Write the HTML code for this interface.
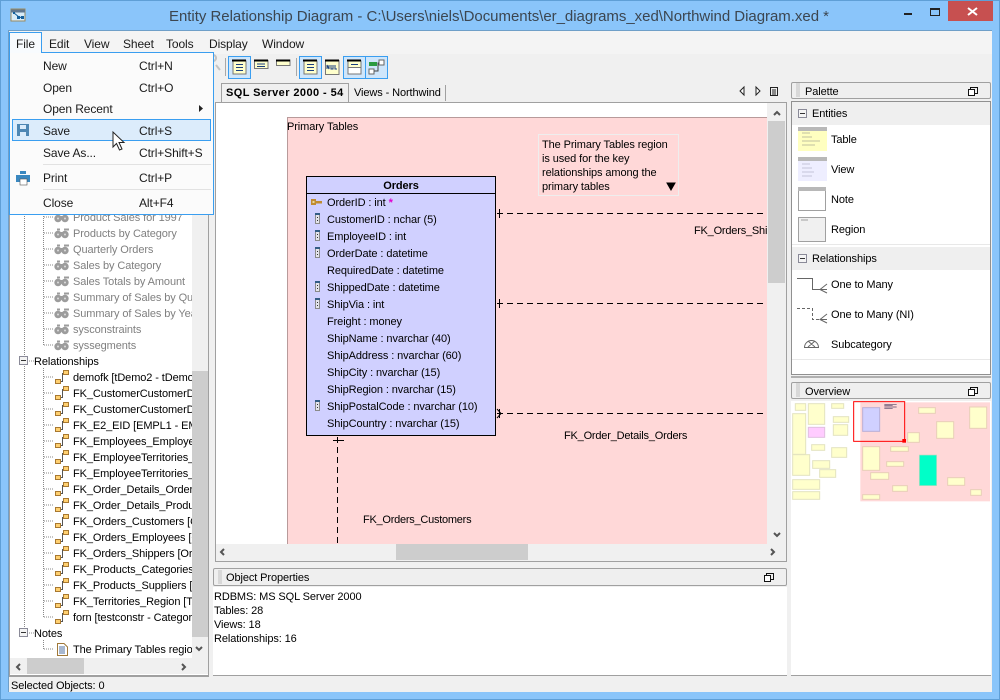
<!DOCTYPE html>
<html><head><meta charset="utf-8"><title>Entity Relationship Diagram</title>
<style>
html,body{margin:0;padding:0}
body{width:1000px;height:700px;overflow:hidden;position:relative;background:#8ac5fa;font:11px/14px "Liberation Sans",sans-serif;color:#000}
div{position:absolute;box-sizing:border-box}
.t{white-space:nowrap;height:14px;letter-spacing:-.1px;margin-top:1px}
.g{color:#808080}
svg{position:absolute;left:0;top:0}
.m{font-size:12px;letter-spacing:-.1px;color:#1a1a1a;margin-top:0}
.clip{overflow:hidden}
</style></head><body>
<div style="left:0;top:0;width:1000px;height:700px;border:1px solid #5f9fd6"></div>
<div class="t" id="title" style="left:169px;top:7px;height:18px;font-size:15px;line-height:18px;color:#3c4650;letter-spacing:-.03px">Entity Relationship Diagram - C:\Users\niels\Documents\er_diagrams_xed\Northwind Diagram.xed *</div>
<div style="left:948px;top:1px;width:45px;height:20px;background:#c75050"></div>
<div style="left:8px;top:30px;width:984px;height:662px;background:#f0f0f0;border:1px solid #6f9fc8;border-width:1px 0 0 1px"></div>
<div style="left:9px;top:31px;width:983px;height:23px;background:#f4f4f4"></div>

<!-- menu bar -->
<div class="t m" style="left:49px;top:37px">Edit</div>
<div class="t m" style="left:84px;top:37px">View</div>
<div class="t m" style="left:123px;top:37px">Sheet</div>
<div class="t m" style="left:166px;top:37px">Tools</div>
<div class="t m" style="left:209px;top:37px">Display</div>
<div class="t m" style="left:262px;top:37px">Window</div>

<!-- left tree panel -->
<div style="left:9px;top:54px;width:200px;height:623px;background:#fff;border:1px solid #a0a0a0;border-top:0"></div>
<div style="left:192px;top:214px;width:16px;height:444px;background:#f0f0f0"></div>
<div style="left:192px;top:371px;width:16px;height:266px;background:#cdcdcd"></div>
<div style="left:10px;top:658px;width:198px;height:16px;background:#f0f0f0"></div>
<div style="left:27px;top:658px;width:57px;height:16px;background:#cdcdcd"></div>
<div style="left:9px;top:675px;width:200px;height:2px;background:#a0a0a0"></div>
<div class="clip" id="tree" style="left:10px;top:208px;width:182px;height:450px">
<div class="t g" style="left:63px;top:2px">Product Sales for 1997</div>
<div class="t g" style="left:63px;top:18px">Products by Category</div>
<div class="t g" style="left:63px;top:34px">Quarterly Orders</div>
<div class="t g" style="left:63px;top:50px">Sales by Category</div>
<div class="t g" style="left:63px;top:66px">Sales Totals by Amount</div>
<div class="t g" style="left:63px;top:82px">Summary of Sales by Quarter</div>
<div class="t g" style="left:63px;top:98px">Summary of Sales by Year</div>
<div class="t g" style="left:63px;top:114px">sysconstraints</div>
<div class="t g" style="left:63px;top:130px">syssegments</div>
<div class="t" style="left:24px;top:146px">Relationships</div>
<div class="t" style="left:63px;top:162px">demofk [tDemo2 - tDemo1]</div>
<div class="t" style="left:63px;top:178px">FK_CustomerCustomerDemo</div>
<div class="t" style="left:63px;top:194px">FK_CustomerCustomerDemo</div>
<div class="t" style="left:63px;top:210px">FK_E2_EID [EMPL1 - EMPL2]</div>
<div class="t" style="left:63px;top:226px">FK_Employees_Employees</div>
<div class="t" style="left:63px;top:242px">FK_EmployeeTerritories_Emp</div>
<div class="t" style="left:63px;top:258px">FK_EmployeeTerritories_Terr</div>
<div class="t" style="left:63px;top:274px">FK_Order_Details_Orders</div>
<div class="t" style="left:63px;top:290px">FK_Order_Details_Products</div>
<div class="t" style="left:63px;top:306px">FK_Orders_Customers [Orders]</div>
<div class="t" style="left:63px;top:322px">FK_Orders_Employees [Orders]</div>
<div class="t" style="left:63px;top:338px">FK_Orders_Shippers [Orders]</div>
<div class="t" style="left:63px;top:354px">FK_Products_Categories</div>
<div class="t" style="left:63px;top:370px">FK_Products_Suppliers [Prod]</div>
<div class="t" style="left:63px;top:386px">FK_Territories_Region [Terr]</div>
<div class="t" style="left:63px;top:402px">forn [testconstr - Categories]</div>
<div class="t" style="left:24px;top:418px">Notes</div>
<div class="t" style="left:63px;top:434px">The Primary Tables region is</div>
</div>
<div class="t" style="left:11px;top:678px">Selected Objects: 0</div>

<!-- tabs -->
<div style="left:221px;top:83px;width:128px;height:20px;background:#f0f0f0;border:1px solid #a0a0a0;border-bottom:0"></div>
<div class="t" style="left:226px;top:85px;font-weight:bold;letter-spacing:.42px">SQL Server 2000 - 54</div>
<div class="t" style="left:354px;top:85px">Views - Northwind</div>
<div style="left:445px;top:85px;width:1px;height:16px;background:#a0a0a0"></div>

<!-- diagram -->
<div style="left:215px;top:102px;width:572px;height:460px;background:#f0f0f0;border:1px solid #a0a0a0"></div>
<div style="left:216px;top:103px;width:551px;height:441px;background:#fff"></div>
<div style="left:768px;top:121px;width:17px;height:162px;background:#cdcdcd"></div>
<div style="left:396px;top:544px;width:132px;height:16px;background:#cdcdcd"></div>
<div class="clip" style="left:216px;top:103px;width:551px;height:441px">
  <div style="left:71px;top:14px;width:490px;height:440px;background:#ffd8d8;border:1px solid #b89a9a;border-width:1px 0 0 1px"></div>
  <div class="t" style="left:71px;top:16px">Primary Tables</div>
  <div style="left:322px;top:31px;width:141px;height:62px;border:1px solid #eee"></div>
  <div class="t" style="left:326px;top:34px">The Primary Tables region</div>
  <div class="t" style="left:326px;top:48px">is used for the key</div>
  <div class="t" style="left:326px;top:62px">relationships among the</div>
  <div class="t" style="left:326px;top:76px">primary tables</div>
  <div class="t" style="left:478px;top:120px;letter-spacing:-.2px">FK_Orders_Shippers</div>
  <div class="t" style="left:348px;top:325px;letter-spacing:-.2px">FK_Order_Details_Orders</div>
  <div class="t" style="left:147px;top:409px;letter-spacing:-.25px">FK_Orders_Customers</div>
  <svg width="551" height="441" style="left:0;top:0" fill="none" stroke="#000">
    <path d="M281 110.500H551M281 200.500H551M281 310.500H551" stroke-dasharray="6 4"/>
    <path d="M121.500 334V441" stroke-dasharray="6 4"/>
    <path d="M283.500 106V115M283.500 196V205M283.500 306V315M281 306L285 310.500 281 315M117 337.500H128"/>
    <path d="M451 80h8l-4 7z" fill="#000"/>
  </svg>
</div>

<!-- Orders table -->
<div style="left:306px;top:176px;width:190px;height:260px;background:#d0d0ff;border:1px solid #000"></div>
<div style="left:306px;top:193px;width:190px;height:1px;background:#000"></div>
<div class="t" style="left:306px;top:178px;width:190px;text-align:center;font-weight:bold">Orders</div>
<div class="t" style="left:327px;top:195px">OrderID : int <span style="color:#e000d0;font-weight:bold">*</span></div>
<div class="t" style="left:327px;top:212px">CustomerID : nchar (5)</div>
<div class="t" style="left:327px;top:229px">EmployeeID : int</div>
<div class="t" style="left:327px;top:246px">OrderDate : datetime</div>
<div class="t" style="left:327px;top:263px">RequiredDate : datetime</div>
<div class="t" style="left:327px;top:280px">ShippedDate : datetime</div>
<div class="t" style="left:327px;top:297px">ShipVia : int</div>
<div class="t" style="left:327px;top:314px">Freight : money</div>
<div class="t" style="left:327px;top:331px">ShipName : nvarchar (40)</div>
<div class="t" style="left:327px;top:348px">ShipAddress : nvarchar (60)</div>
<div class="t" style="left:327px;top:365px">ShipCity : nvarchar (15)</div>
<div class="t" style="left:327px;top:382px">ShipRegion : nvarchar (15)</div>
<div class="t" style="left:327px;top:399px">ShipPostalCode : nvarchar (10)</div>
<div class="t" style="left:327px;top:416px">ShipCountry : nvarchar (15)</div>

<!-- Object properties -->
<div style="left:213px;top:568px;width:574px;height:18px;background:#efefef;border:1px solid #a0a0a0;border-radius:2px"></div>
<div class="t" style="left:226px;top:570px">Object Properties</div>
<div style="left:213px;top:587px;width:574px;height:89px;background:#fff;border-bottom:1px solid #a0a0a0"></div>
<div class="t" style="left:214px;top:589px">RDBMS: MS SQL Server 2000</div>
<div class="t" style="left:214px;top:603px">Tables: 28</div>
<div class="t" style="left:214px;top:617px">Views: 18</div>
<div class="t" style="left:214px;top:631px">Relationships: 16</div>

<!-- right column -->
<div style="left:791px;top:82px;width:200px;height:17px;background:#efefef;border:1px solid #a0a0a0;border-radius:2px"></div>
<div class="t" style="left:805px;top:84px">Palette</div>
<div style="left:791px;top:101px;width:200px;height:274px;background:#fff;border:1px solid #909090"></div>
<div style="left:792px;top:102px;width:198px;height:23px;background:#efefef"></div>
<div class="t" style="left:812px;top:106px">Entities</div>
<div class="t" style="left:831px;top:132px">Table</div>
<div class="t" style="left:831px;top:162px">View</div>
<div class="t" style="left:831px;top:192px">Note</div>
<div class="t" style="left:831px;top:222px">Region</div>
<div style="left:792px;top:244px;width:198px;height:1px;background:#e8e8e8"></div>
<div style="left:792px;top:247px;width:198px;height:23px;background:#efefef"></div>
<div class="t" style="left:812px;top:251px">Relationships</div>
<div class="t" style="left:831px;top:277px">One to Many</div>
<div class="t" style="left:831px;top:307px">One to Many (NI)</div>
<div class="t" style="left:831px;top:337px">Subcategory</div>
<div style="left:792px;top:359px;width:198px;height:1px;background:#e8e8e8"></div>
<div style="left:791px;top:376px;width:200px;height:2px;background:#b0b0b0"></div>
<div style="left:791px;top:382px;width:200px;height:17px;background:#efefef;border:1px solid #a0a0a0;border-radius:2px"></div>
<div class="t" style="left:805px;top:384px">Overview</div>
<div style="left:791px;top:401px;width:200px;height:275px;background:#fff;border-bottom:1px solid #a0a0a0"></div>

<!-- overview -->
<svg width="220" height="270" viewBox="0 0 660 810" style="left:780px;top:240px">
<rect x="241" y="487" width="389" height="297" fill="#ffd8d8"/>
<g fill="#ffffcc" stroke="#e4e4c0" stroke-width="3">
<rect x="46" y="491" width="31" height="20"/><rect x="85" y="491" width="49" height="62"/><rect x="155" y="491" width="36" height="14"/><rect x="160" y="530" width="46" height="17"/><rect x="160" y="554" width="43" height="32"/><rect x="38" y="521" width="39" height="122"/><rect x="95" y="614" width="39" height="17"/><rect x="155" y="623" width="45" height="29"/><rect x="38" y="644" width="51" height="62"/><rect x="98" y="662" width="51" height="23"/><rect x="119" y="689" width="48" height="23"/><rect x="38" y="719" width="81" height="29"/><rect x="38" y="755" width="81" height="23"/>
</g>
<rect x="85" y="562" width="49" height="30" fill="#ffccff" stroke="#e0c0e0" stroke-width="3"/>
<g fill="#ffffcc" stroke="#e8d0b8" stroke-width="3">
<rect x="416" y="503" width="50" height="17"/><rect x="569" y="501" width="51" height="64"/><rect x="470" y="545" width="51" height="50"/><rect x="383" y="578" width="35" height="29"/><rect x="248" y="620" width="51" height="71"/><rect x="332" y="620" width="53" height="14"/><rect x="320" y="665" width="51" height="14"/><rect x="272" y="698" width="54" height="20"/><rect x="503" y="713" width="51" height="23"/><rect x="338" y="737" width="44" height="17"/><rect x="572" y="749" width="32" height="17"/><rect x="248" y="764" width="51" height="14"/>
</g>
<rect x="418" y="645" width="52" height="92" fill="#00ffc8" stroke="#c0d8c0" stroke-width="2"/>
<rect x="248" y="503" width="51" height="71" fill="#d0d0ff" stroke="#b8b0d8" stroke-width="3"/>
<path d="M313 493h37M313 497h25M313 501h37M313 505h25" stroke="#554466" stroke-width="2"/>
<rect x="221" y="485" width="153" height="119" fill="none" stroke="#f00" stroke-width="3"/>
<rect x="367" y="597" width="11" height="11" fill="#f00"/>
</svg>

<!-- global icon overlay -->
<svg width="1000" height="700" fill="none">
<defs>
<g id="rel"><path d="M5 4.500H7.500V-3.500H9" stroke="#555"/><rect x=".5" y="2.500" width="5" height="4" fill="#ffd070" stroke="#a87830"/><rect x="8.500" y="-6.500" width="5" height="4" fill="#ffd070" stroke="#a87830"/></g>
<g id="vw"><circle cx="4" cy="1.500" r="3.700" fill="#9c9c9c"/><circle cx="11" cy="1.500" r="3.700" fill="#9c9c9c"/><path d="M3 -3.500H6M6 0H9M10 -3.500H15" stroke="#9c9c9c" stroke-width="2"/><circle cx="4" cy="1.500" r="1" fill="#dcdcdc"/><circle cx="11" cy="1.500" r="1" fill="#dcdcdc"/></g>
<g id="idx"><rect x="-1.500" y="-5.500" width="4" height="10" fill="#e4e4ec" stroke="#8a8a8a"/><rect x="-2" y="-6" width="5" height="2" fill="#335c85"/><path d="M.5 -2v1M.5 1v1" stroke="#333"/></g>
<g id="exp"><rect x=".5" y=".5" width="8" height="8" fill="#f4f4f4" stroke="#8a8a98"/><path d="M2 4.500H7" stroke="#333"/></g>
<g id="res"><rect x=".5" y="2.500" width="6" height="6" fill="#fff" stroke="#111"/><path d="M2.500 2.500V.5H9.500V6.500H6.500" stroke="#111"/></g>
<g id="grip"><path d="M0 0H4M0 2H4M0 4H4M0 6H4M0 8H4M0 10H4M0 12H4" stroke="#c0c0c0"/></g>
</defs>

<!-- title icon + window buttons -->
<rect x="11" y="9" width="14" height="12" fill="#d8ecf8" stroke="#9a8a60"/><path d="M11 11H25" stroke="#607890" stroke-width="3"/><path d="M14 13L19 17L23 18" stroke="#14609c"/><rect x="13" y="12" width="2" height="2" fill="#14609c"/><rect x="17" y="16" width="3" height="3" fill="#14609c"/><rect x="21" y="16" width="3" height="3" fill="#14609c"/>
<path d="M904 14H912" stroke="#222" stroke-width="2"/><rect x="930.500" y="8.500" width="9" height="7" stroke="#222"/><path d="M930 9H940" stroke="#222" stroke-width="2"/>
<path d="M968 8L977 15M977 8L968 15" stroke="#fff" stroke-width="2"/>

<!-- toolbar -->
<path d="M225.500 58V76M296.500 58V76" stroke="#a8a8a8"/>
<path d="M213 61a3 3 0 1 1 .1 0M216 65L220 70" stroke="#c4c4c4" stroke-width="2"/>
<g fill="#cfe6fb" stroke="#3a9ef0"><rect x="228.500" y="56.500" width="22" height="22"/><rect x="299.500" y="56.500" width="22" height="22"/><rect x="343.500" y="56.500" width="22" height="22"/><rect x="365.500" y="56.500" width="22" height="22"/></g>
<path d="M233 61H246V74H233Z" fill="#ffffcc" stroke="#777"/><path d="M232 60.500H246" stroke="#000" stroke-width="2"/><path d="M236 64.500H243M236 67.500H243M236 70.500H243" stroke="#1a3f80"/>
<path d="M254.500 60.500H268V68.500H254.500Z" fill="#ffffcc" stroke="#777"/><path d="M254 60.500H268" stroke="#000" stroke-width="2"/><path d="M257 64H265M257 66.500H265" stroke="#1a3f80"/>
<path d="M276.500 60H290V65.500H276.500Z" fill="#ffffcc" stroke="#777"/><path d="M276 60.500H290" stroke="#000" stroke-width="2"/>
<path d="M304 61H317V74H304Z" fill="#ffffcc" stroke="#777"/><path d="M303 60.500H317" stroke="#000" stroke-width="2"/><path d="M307 64.500H314M307 67.500H314M307 70.500H314" stroke="#1a3f80"/>
<path d="M325.500 60.500H339V74.500H325.500Z" fill="#ffffcc" stroke="#777"/><path d="M325 60.500H339" stroke="#000" stroke-width="2"/><path d="M327 69V65L329 69V65M331 65V69H333V65M335 65V69H337" stroke="#1a3f80"/>
<path d="M348 61H361V74H348Z" fill="#fff" stroke="#777"/><path d="M348 67.500H361V61H348Z" fill="#ffffcc" stroke="#777"/><path d="M347 60.500H361" stroke="#000" stroke-width="2"/><path d="M351 64.500H358" stroke="#1a3f80"/>
<rect x="369" y="69" width="5" height="5" fill="#fff" stroke="#666"/><rect x="379" y="60" width="5" height="5" fill="#fff" stroke="#666"/><path d="M374 71H378V63H379" stroke="#444"/><rect x="369" y="62" width="8" height="4" fill="#2a9a40"/>

<!-- tab nav -->
<path d="M744 87L740 91L744 95Z M756 87L760 91L756 95Z" stroke="#222" fill="#fff"/><rect x="770.500" y="87.500" width="7" height="8" stroke="#222"/><path d="M772 90H776M772 92H776M772 94H776" stroke="#222"/>

<!-- scroll arrows -->
<g stroke="#555" stroke-width="2"><path d="M774 115L777 112L780 115M774 533L777 536L780 533M224 549L221 552L224 555M771 549L774 552L771 555M196 647L199 650L202 647M20 664L17 667L20 670M182 664L185 667L182 670"/></g>

<!-- tree lines -->
<g stroke="#888" stroke-dasharray="1 1">
<path d="M24.500 214V630M43.500 214V345M43.500 368V617M43.500 640V649"/>
<path d="M44 217H54M44 233H54M44 249H54M44 265H54M44 281H54M44 297H54M44 313H54M44 329H54M44 345H54M29 361H34M44 377H54M44 393H54M44 409H54M44 425H54M44 441H54M44 457H54M44 473H54M44 489H54M44 505H54M44 521H54M44 537H54M44 553H54M44 569H54M44 585H54M44 601H54M44 617H54M29 633H34M44 649H54"/>
</g>
<use href="#vw" x="54" y="217"/><use href="#vw" x="54" y="233"/><use href="#vw" x="54" y="249"/><use href="#vw" x="54" y="265"/><use href="#vw" x="54" y="281"/><use href="#vw" x="54" y="297"/><use href="#vw" x="54" y="313"/><use href="#vw" x="54" y="329"/><use href="#vw" x="54" y="345"/>
<use href="#exp" x="19" y="356"/><use href="#exp" x="19" y="628"/>
<use href="#rel" x="55" y="377"/><use href="#rel" x="55" y="393"/><use href="#rel" x="55" y="409"/><use href="#rel" x="55" y="425"/><use href="#rel" x="55" y="441"/><use href="#rel" x="55" y="457"/><use href="#rel" x="55" y="473"/><use href="#rel" x="55" y="489"/><use href="#rel" x="55" y="505"/><use href="#rel" x="55" y="521"/><use href="#rel" x="55" y="537"/><use href="#rel" x="55" y="553"/><use href="#rel" x="55" y="569"/><use href="#rel" x="55" y="585"/><use href="#rel" x="55" y="601"/><use href="#rel" x="55" y="617"/>
<path d="M57.500 643.500H64L67.500 647V655.500H57.500Z" fill="#fff" stroke="#a07838"/><path d="M59 647H65M59 649H65M59 651H65M59 653H65" stroke="#5070a0"/>

<!-- table row icons -->
<path d="M311 199H316V205H311ZM316 201H322V203.500H316Z" fill="#c08c30"/><rect x="312.500" y="201" width="2" height="2" fill="#e8d8a0"/>
<use href="#idx" x="317" y="219"/><use href="#idx" x="317" y="236"/><use href="#idx" x="317" y="253"/><use href="#idx" x="317" y="287"/><use href="#idx" x="317" y="304"/><use href="#idx" x="317" y="406"/>

<!-- panel chrome -->
<use href="#grip" x="796" y="84"/><use href="#grip" x="796" y="384"/><use href="#grip" x="218" y="571"/>
<use href="#res" x="968" y="87"/><use href="#res" x="968" y="387"/><use href="#res" x="764" y="573"/>
<use href="#exp" x="798" y="109"/><use href="#exp" x="798" y="254"/>

<!-- palette thumbnails -->
<rect x="798" y="127" width="29" height="24" fill="#ffffc0"/><rect x="798" y="127" width="29" height="4" fill="#b8b8b8"/><path d="M802 133H810M802 137H812M802 141H820M802 145H815" stroke="#c0c0a0"/>
<rect x="798" y="157" width="29" height="24" fill="#eeeeff"/><rect x="798" y="157" width="29" height="4" fill="#b8b8b8"/><path d="M802 164H810M802 168H812M802 172H814M802 176H812" stroke="#c4c4d8"/>
<rect x="798.500" y="187.500" width="27" height="23" fill="#fff" stroke="#a0a0a0"/><rect x="798" y="187" width="28" height="4" fill="#b8b8b8"/>
<rect x="798.500" y="217.500" width="27" height="24" fill="#f0f0f0" stroke="#a0a0a0"/><path d="M801 220H808" stroke="#a0a0a0"/>

<path d="M797 278.500H812.500V289.500H824M827 284L820 289.500L827 293M824 289.500H827" stroke="#666"/>
<path d="M797 308.500H812.500V319.500H824" stroke="#666" stroke-dasharray="3 2"/><path d="M827 314L820 319.500L827 323M824 319.500H827" stroke="#666"/>
<path d="M804.500 347.500A7 7 0 0 1 818.500 347.500ZM808 341L815 347M815 341L808 347" stroke="#666"/>

<!-- file menu -->
<rect x="9.500" y="32.500" width="32" height="20" fill="#f8fbfe" stroke="#3a9ef0"/>
<rect x="9.500" y="52.500" width="204" height="162" fill="#fbfbfb" stroke="#3a9ef0"/>
<path d="M41 52.500H10" stroke="#f8fbfe" stroke-width="1"/>
<rect x="12.500" y="119.500" width="198" height="21" fill="#dcecfb" stroke="#3a9ef0"/>
<path d="M43 164.500H211M43 189.500H211" stroke="#e2e2e2"/>
<path d="M199 105L203 108.500L199 112Z" fill="#222"/>
<path d="M17 124H29V136H17Z" fill="#4f87b3"/><rect x="20" y="125" width="6" height="4" fill="#dcecfb"/><rect x="20" y="132" width="6" height="4" fill="#dcecfb"/>
<path d="M16 175H30V182H16Z" fill="#3a88c0"/><rect x="20" y="171" width="6" height="3" fill="#3a88c0"/><rect x="20" y="179" width="7" height="6" fill="#fff" stroke="#555" stroke-width=".6"/>
<path d="M113 132V147L116.500 143.500L119.500 150L122 149L119 142.500H124Z" fill="#fff" stroke="#222"/>
</svg>
<div class="t m" style="left:16px;top:37px">File</div>
<div class="t m" style="left:43px;top:59px">New</div><div class="t m" style="left:139px;top:59px">Ctrl+N</div>
<div class="t m" style="left:43px;top:81px">Open</div><div class="t m" style="left:139px;top:81px">Ctrl+O</div>
<div class="t m" style="left:43px;top:102px">Open Recent</div>
<div class="t m" style="left:43px;top:124px">Save</div><div class="t m" style="left:139px;top:124px">Ctrl+S</div>
<div class="t m" style="left:43px;top:146px">Save As...</div><div class="t m" style="left:139px;top:146px">Ctrl+Shift+S</div>
<div class="t m" style="left:43px;top:171px">Print</div><div class="t m" style="left:139px;top:171px">Ctrl+P</div>
<div class="t m" style="left:43px;top:196px">Close</div><div class="t m" style="left:139px;top:196px">Alt+F4</div>
</body></html>
